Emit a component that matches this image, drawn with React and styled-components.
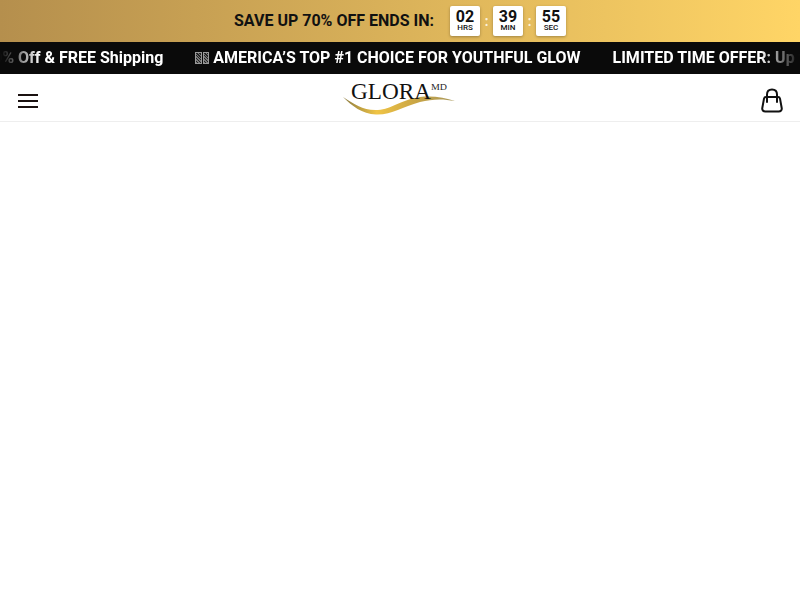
import React from 'react';
import styled, { createGlobalStyle } from 'styled-components';

const GlobalStyle = createGlobalStyle`
  * {
    margin: 0;
    padding: 0;
    box-sizing: border-box;
  }
  body {
    background: #fff;
    font-family: Roboto, Arial, sans-serif;
  }
`;

const Page = styled.div`
  width: 100%;
  height: 600px;
  overflow: hidden;
  background: #fff;
`;

const PromoBar = styled.div`
  height: 42px;
  display: flex;
  align-items: center;
  justify-content: center;
  gap: 16px;
  background: linear-gradient(90deg, #b58f4d 0%, #ffd566 100%);
`;

const PromoText = styled.span`
  font-size: 16px;
  font-weight: 700;
  line-height: 20px;
  color: #111;
`;

const Countdown = styled.div`
  display: flex;
  align-items: center;
`;

const TimeBox = styled.div`
  width: 30px;
  height: 30px;
  display: flex;
  flex-direction: column;
  align-items: center;
  justify-content: center;
  background: #fff;
  border-radius: 2px;
  box-shadow: 0 1px 3px rgba(0, 0, 0, 0.3);
  color: #111;
`;

const TimeValue = styled.span`
  font-size: 16px;
  font-weight: 700;
  line-height: 14px;
`;

const TimeLabel = styled.span`
  font-size: 8px;
  font-weight: 500;
  line-height: 8px;
`;

const Colon = styled.span`
  width: 13px;
  text-align: center;
  font-size: 14px;
  font-weight: 700;
  line-height: 14px;
  color: #fff;
  opacity: 0.8;
`;

const Ticker = styled.div`
  height: 32px;
  background: #0a0a0a;
  overflow: hidden;
  display: flex;
  align-items: center;
`;

const TickerFade = styled.div`
  width: 100%;
  overflow: hidden;
  -webkit-mask-image: linear-gradient(90deg, transparent 0, #000 40px, #000 760px, transparent 100%);
  mask-image: linear-gradient(90deg, transparent 0, #000 40px, #000 760px, transparent 100%);
`;

const TickerTrack = styled.div`
  display: flex;
  gap: 32px;
  width: max-content;
  margin-left: ${(props) => props.$offset}px;
`;

const TickerItem = styled.span`
  display: flex;
  align-items: center;
  font-size: 16px;
  font-weight: 700;
  line-height: 32px;
  white-space: nowrap;
  color: #fff;
`;

// the flag emoji shows as two missing-glyph boxes in the screenshot
const FlagBoxes = styled.span`
  display: flex;
  gap: 1px;
  margin-right: 4px;
`;

const FlagBox = styled.i`
  display: block;
  width: 6.500px;
  height: 12px;
  border: 1px solid #999;
  background: repeating-linear-gradient(45deg, #777 0 1px, #222 1px 2px);
`;

const Header = styled.header`
  height: 48px;
  padding: 7px 16px 0 18px;
  display: flex;
  align-items: center;
  justify-content: space-between;
  background: #fff;
  border-bottom: 1px solid #eee;
`;

const IconButton = styled.button`
  display: flex;
  border: none;
  background: none;
  color: #111;
`;

const LogoLink = styled.a`
  display: flex;
  margin: 0 0 6px 2px;
`;

const limitedOffer = 'LIMITED TIME OFFER: Up to 70% Off & FREE Shipping';

const countdown = [
  { value: '02', label: 'HRS' },
  { value: '39', label: 'MIN' },
  { value: '55', label: 'SEC' },
];

function Logo() {
  return (
    <svg width="116" height="36" viewBox="0 0 116 36" aria-label="Glora MD">
      <defs>
        <linearGradient id="swoosh" x1="0" x2="1" y1="0" y2="0">
          <stop offset="0" stopColor="#8a7a40" />
          <stop offset="0.3" stopColor="#f0c445" />
          <stop offset="0.65" stopColor="#c9a545" />
          <stop offset="1" stopColor="#a8985c" />
        </linearGradient>
      </defs>
      <path
        d="M1 17C12 24 22 31 36 30C50 29 58 20 78 17C90 15.500 103 17.500 113 21C100 18.500 90 19 78 22C60 27 50 35 34 34.500C20 34 10 26 1 17Z"
        fill="url(#swoosh)"
      />
      <text x="9" y="19" fontFamily="'Liberation Serif', serif" fontSize="24" fill="#111" textLength="80" lengthAdjust="spacingAndGlyphs">
        GLORA
      </text>
      <text x="89" y="10" fontFamily="'Liberation Serif', serif" fontSize="8" fill="#222" textLength="16" lengthAdjust="spacingAndGlyphs">
        MD
      </text>
    </svg>
  );
}

function App() {
  return (
    <Page>
      <GlobalStyle />
      <PromoBar>
        <PromoText>SAVE UP 70% OFF ENDS IN:</PromoText>
        <Countdown>
          {countdown.map((item, i) => (
            <React.Fragment key={item.label}>
              {i > 0 && <Colon>:</Colon>}
              <TimeBox>
                <TimeValue>{item.value}</TimeValue>
                <TimeLabel>{item.label}</TimeLabel>
              </TimeBox>
            </React.Fragment>
          ))}
        </Countdown>
      </PromoBar>
      <Ticker>
        <TickerFade>
          <TickerTrack $offset={-220.5}>
            <TickerItem>{limitedOffer}</TickerItem>
            <TickerItem>
              <FlagBoxes aria-hidden="true">
                <FlagBox />
                <FlagBox />
              </FlagBoxes>
              AMERICA’S TOP #1 CHOICE FOR YOUTHFUL GLOW
            </TickerItem>
            <TickerItem>{limitedOffer}</TickerItem>
          </TickerTrack>
        </TickerFade>
      </Ticker>
      <Header>
        <IconButton aria-label="Menu">
          <svg width="20" height="14" viewBox="0 0 20 14" fill="none" stroke="#1a1110" strokeWidth="2">
            <path d="M0 1h20M0 7h20M0 13h20" />
          </svg>
        </IconButton>
        <LogoLink href="#">
          <Logo />
        </LogoLink>
        <IconButton aria-label="Cart">
          <svg width="24" height="26" viewBox="0 0 24 26" fill="none" stroke="#111" strokeWidth="2" strokeLinecap="round" strokeLinejoin="round">
            <path d="M6 9h12c1 0 1.800.6 2 1.600l1.700 9.400c.4 2-1 3.500-3 3.500H5.300c-2 0-3.400-1.500-3-3.500L4 10.600C4.200 9.600 5 9 6 9Z" />
            <path d="M7 14V6.500C7 3.500 9 1.500 12 1.500s5 2 5 5V14" />
          </svg>
        </IconButton>
      </Header>
    </Page>
  );
}

export default App;
